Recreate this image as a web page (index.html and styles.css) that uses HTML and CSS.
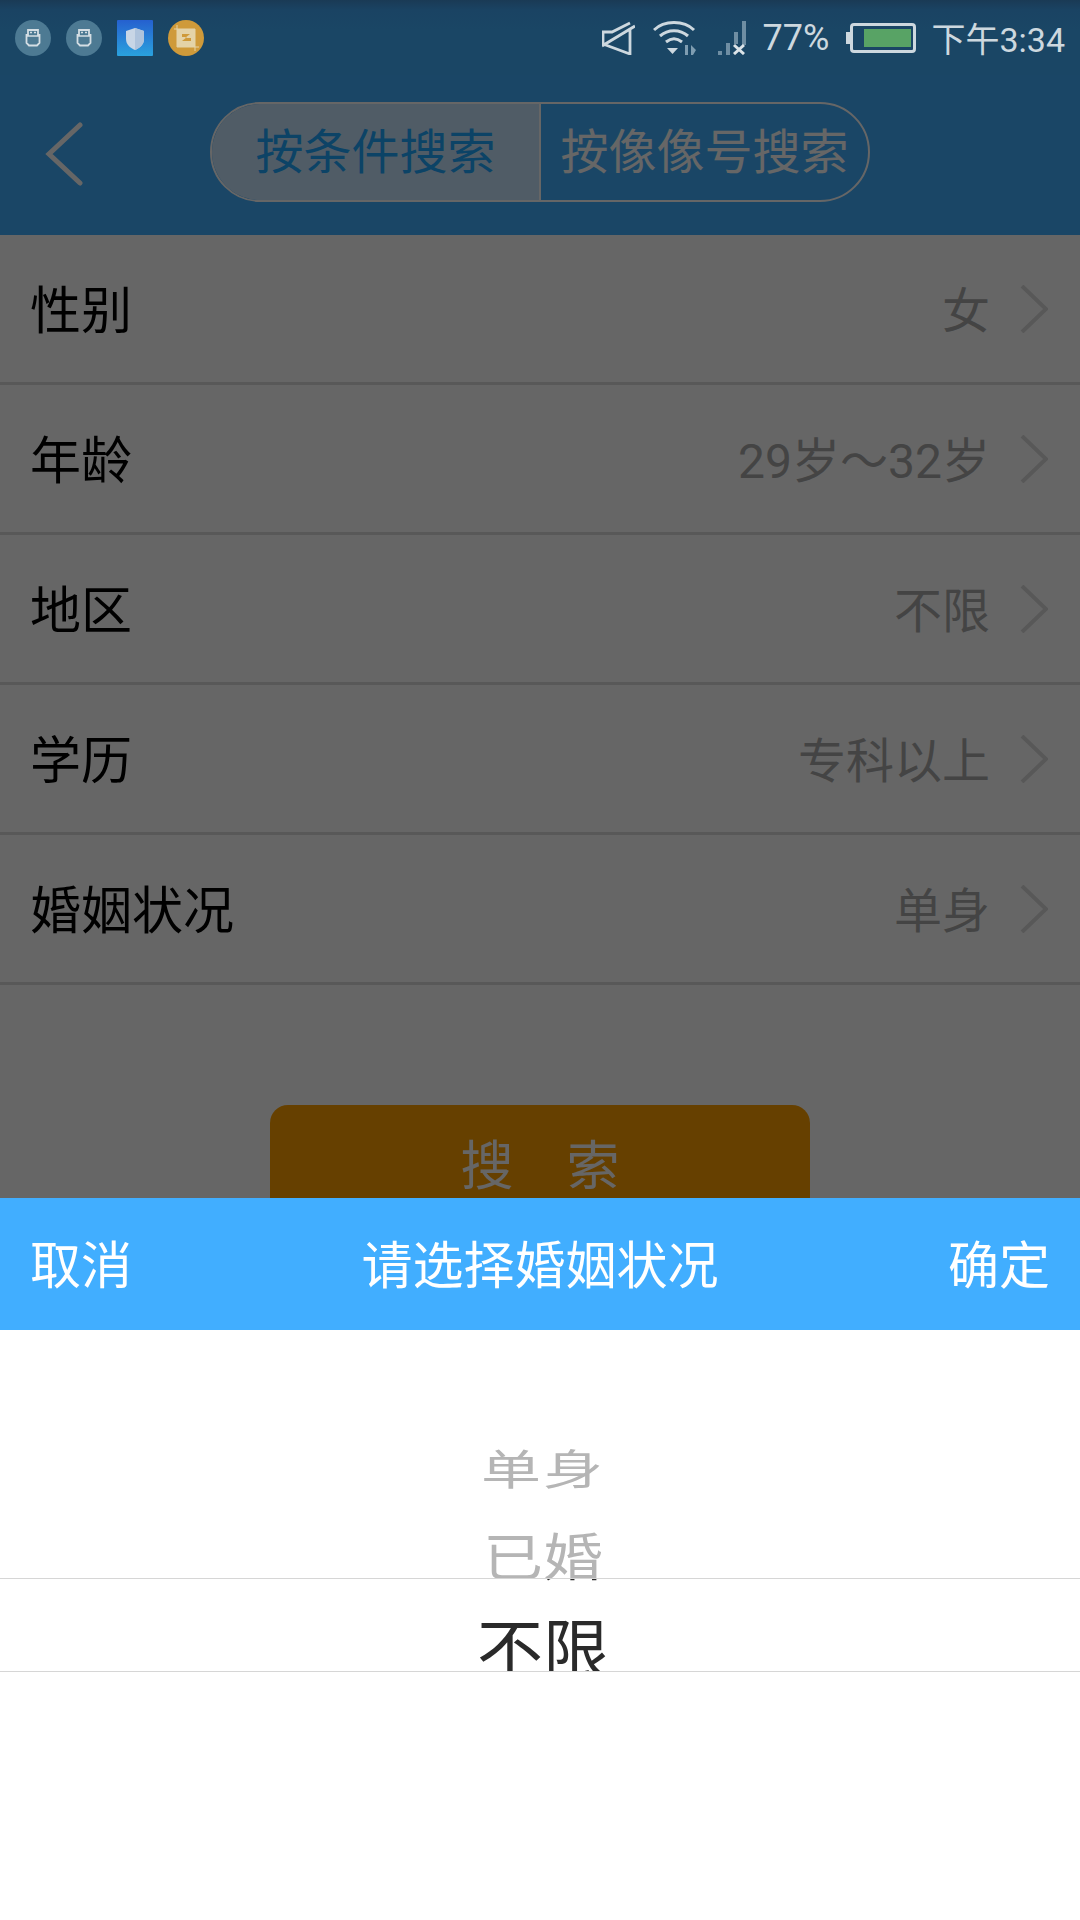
FILE: index.html
```html
<!DOCTYPE html>
<html lang="zh-CN">
<head>
    <meta charset="UTF-8">
    <meta name="viewport" content="width=device-width, initial-scale=1.0">
    <title>搜索</title>
    <link rel="stylesheet" href="styles.css">
</head>
<body>
    <div class="status-bar">
        <div class="status-left">
            <svg class="notify-icon" viewBox="0 0 36 36">
                <circle cx="18" cy="18" r="18" fill="#4d7a93"/>
                <path d="M13 10h10v5h1.500v8l-2.500 2.500h-8l-2.500-2.500v-8h1.500z" fill="none" stroke="#d4dee4" stroke-width="1.800"/>
                <path d="M15 12.500h2M19 12.500h2M12 16h12" stroke="#d4dee4" stroke-width="1.500"/>
            </svg>
            <svg class="notify-icon" viewBox="0 0 36 36">
                <circle cx="18" cy="18" r="18" fill="#4d7a93"/>
                <path d="M13 10h10v5h1.500v8l-2.500 2.500h-8l-2.500-2.500v-8h1.500z" fill="none" stroke="#d4dee4" stroke-width="1.800"/>
                <path d="M15 12.500h2M19 12.500h2M12 16h12" stroke="#d4dee4" stroke-width="1.500"/>
            </svg>
            <svg class="notify-icon" viewBox="0 0 36 36">
                <defs>
                    <linearGradient id="shieldBg" x1="0" y1="0" x2="0" y2="1">
                        <stop offset="0" stop-color="#2560cf"/>
                        <stop offset="1" stop-color="#2aa2de"/>
                    </linearGradient>
                </defs>
                <rect width="36" height="36" rx="1" fill="url(#shieldBg)"/>
                <path d="M18 8l9 3v8c0 6-4.500 9-9 11c-4.500-2-9-5-9-11v-8z" fill="#c8d6e6"/>
                <path d="M18 8l9 3v8c0 6-4.500 9-9 11z" fill="#aec3dc"/>
            </svg>
            <svg class="notify-icon" viewBox="0 0 36 36">
                <circle cx="18" cy="18" r="18" fill="#cf9a3a"/>
                <rect x="9" y="9" width="18" height="18" fill="#e4d3a8"/>
                <path d="M9 5v22h22M6 9h21v22" fill="none" stroke="#e4d3a8" stroke-width="1"/>
                <path d="M14 14h8l-5 4h6v3h-9l5-4h-5z" fill="#cf9a3a"/>
            </svg>
        </div>
        <div class="status-right">
            <svg class="mute-icon" viewBox="0 0 33 34">
                <path d="M1 24V11h9L28 2M1 23l27 10V9M0 25L33 5" fill="none" stroke="#cdd8df" stroke-width="2.800"/>
            </svg>
            <svg class="wifi-icon" viewBox="0 0 43 34">
                <path d="M1 9C11-1 31-1 41 9M7 15c8-7 20-7 28 0M13 21c5-4 11-4 16 0" fill="none" stroke="#cdd8df" stroke-width="3"/>
                <path d="M14 27h11l-5.500 6z" fill="#cdd8df"/>
                <path d="M32 24v10h3V24zM38 24v10h2l3-5z" fill="#7f9db1"/>
            </svg>
            <svg class="signal-icon" viewBox="0 0 28 34">
                <rect x="0" y="30" width="4" height="4" fill="#6f8ea3"/>
                <rect x="8" y="22" width="4" height="12" fill="#6f8ea3"/>
                <rect x="16" y="11" width="4" height="12" fill="#6f8ea3"/>
                <rect x="24" y="0" width="4" height="24" fill="#6f8ea3"/>
                <path d="M16 24l10 9M26 24l-10 9" stroke="#dbe3e8" stroke-width="3"/>
            </svg>
            <span class="battery-text">77%</span>
            <div class="battery">
                <div class="battery-cap"></div>
                <div class="battery-body">
                    <div class="battery-level"></div>
                </div>
            </div>
            <span class="clock">下午3:34</span>
        </div>
    </div>

    <div class="nav-bar">
        <svg class="back-icon" viewBox="0 0 38 64">
            <path d="M35 3L4 32l31 29" fill="none" stroke="#fff" stroke-width="5" stroke-linecap="round"/>
        </svg>
        <div class="tabs">
            <div class="tab tab-active">按条件搜索</div>
            <div class="tab">按像像号搜索</div>
        </div>
    </div>

    <div class="filter-list">
        <div class="filter-row">
            <span class="filter-label">性别</span>
            <span class="filter-value">女</span>
            <svg class="chevron" viewBox="0 0 28 48"><path d="M2 1l24 23L2 47" fill="none" stroke="#dcdcdc" stroke-width="4"/></svg>
        </div>
        <div class="filter-row">
            <span class="filter-label">年龄</span>
            <span class="filter-value">29岁～32岁</span>
            <svg class="chevron" viewBox="0 0 28 48"><path d="M2 1l24 23L2 47" fill="none" stroke="#dcdcdc" stroke-width="4"/></svg>
        </div>
        <div class="filter-row">
            <span class="filter-label">地区</span>
            <span class="filter-value">不限</span>
            <svg class="chevron" viewBox="0 0 28 48"><path d="M2 1l24 23L2 47" fill="none" stroke="#dcdcdc" stroke-width="4"/></svg>
        </div>
        <div class="filter-row">
            <span class="filter-label">学历</span>
            <span class="filter-value">专科以上</span>
            <svg class="chevron" viewBox="0 0 28 48"><path d="M2 1l24 23L2 47" fill="none" stroke="#dcdcdc" stroke-width="4"/></svg>
        </div>
        <div class="filter-row">
            <span class="filter-label">婚姻状况</span>
            <span class="filter-value">单身</span>
            <svg class="chevron" viewBox="0 0 28 48"><path d="M2 1l24 23L2 47" fill="none" stroke="#dcdcdc" stroke-width="4"/></svg>
        </div>
    </div>

    <button class="search-btn" type="button">搜　索</button>

    <div class="scrim"></div>

    <div class="sheet">
        <div class="sheet-bar">
            <span>取消</span>
            <span class="sheet-title">请选择婚姻状况</span>
            <span>确定</span>
        </div>
        <div class="wheel">
            <div class="wheel-item wheel-far">单身</div>
            <div class="wheel-item wheel-near">已婚</div>
            <!-- selected band sits over the wheel, text inside it is dark -->
            <div class="wheel-band">
                <div class="wheel-item wheel-near band-tail" aria-hidden="true">已婚</div>
                <div class="wheel-item wheel-current">不限</div>
            </div>
        </div>
    </div>
</body>
</html>
```

FILE: styles.css
```css
body {
    margin: 0;
    width: 1080px;
    height: 1920px;
    position: relative;
    overflow: hidden;
    background-color: #fff;
    font-family: Roboto, "Noto Sans CJK SC", sans-serif;
}

/* Status bar stays bright, it is above the scrim */
.status-bar {
    position: relative;
    z-index: 3;
    height: 75px;
    box-sizing: border-box;
    padding: 0 15px 0 15px;
    display: flex;
    justify-content: space-between;
    align-items: center;
    background: linear-gradient(#1a3a55 0, #1a4363 10px, #1a4665 30px);
}

.status-left {
    display: flex;
    gap: 15px;
}

.notify-icon {
    width: 36px;
    height: 36px;
    display: block;
}

.status-right {
    display: flex;
    align-items: center;
    color: #cdd8df;
}

.mute-icon {
    width: 33px;
    height: 34px;
    margin-right: 18px;
}

.wifi-icon {
    width: 43px;
    height: 34px;
    margin-right: 22px;
}

.signal-icon {
    width: 28px;
    height: 34px;
    margin-right: 16px;
}

.battery-text {
    font-size: 36px;
    width: 66px;
    margin-right: 18px;
}

.battery {
    display: flex;
    align-items: center;
    margin-right: 15px;
}

.battery-cap {
    width: 4px;
    height: 12px;
    background-color: #cdd8df;
}

.battery-body {
    width: 66px;
    height: 30px;
    box-sizing: border-box;
    border: 3px solid #cdd8df;
    border-radius: 4px;
    padding: 3px 2px 3px 11px;
}

.battery-level {
    height: 100%;
    background-color: #58a365;
}

.clock {
    font-size: 34px;
}

/* Header */
.nav-bar {
    height: 160px;
    box-sizing: border-box;
    padding: 0 0 6px 45px;
    display: flex;
    align-items: center;
    background-color: #41afff;
}

.back-icon {
    width: 38px;
    height: 64px;
    margin-right: 127px;
    margin-top: 4px;
}

.tabs {
    width: 660px;
    height: 100px;
    box-sizing: border-box;
    display: flex;
    border: 2px solid #fff;
    border-radius: 50px;
    overflow: hidden;
}

.tab {
    font-size: 48px;
    line-height: 98px;
    color: #fff;
    flex: 1;
    text-align: center;
    white-space: nowrap;
}

.tab-active {
    flex: 0 0 327px;
    background-color: #c8e6ff;
    color: #20a8ff;
    border-right: 2px solid #fff;
}

/* Filter rows */
.filter-row {
    height: 150px;
    box-sizing: border-box;
    padding: 0 32px 4px 30px;
    display: flex;
    align-items: center;
    border-bottom: 3px solid #dcdcdc;
}

.filter-label {
    font-size: 51px;
    color: #000;
    flex: 1;
}

.filter-value {
    font-size: 48px;
    color: #aaa;
    margin-right: 30px;
}

.chevron {
    width: 28px;
    height: 48px;
    margin-top: 4px;
}

.search-btn {
    display: block;
    width: 540px;
    height: 120px;
    margin: 120px auto 0;
    padding: 0 0 6px;
    border: none;
    border-radius: 18px;
    background-color: #ffa000;
    color: #fff;
    font-family: inherit;
    font-size: 53px;
}

.scrim {
    position: absolute;
    top: 0;
    left: 0;
    width: 100%;
    height: 100%;
    z-index: 2;
    background-color: rgba(0, 0, 0, 0.6);
}

/* Bottom picker */
.sheet {
    position: absolute;
    left: 0;
    bottom: 0;
    width: 100%;
    height: 722px;
    z-index: 3;
    background-color: #fff;
}

.sheet-bar {
    height: 132px;
    box-sizing: border-box;
    padding: 0 30px 4px;
    display: flex;
    justify-content: space-between;
    align-items: center;
    background-color: #41aeff;
    color: #fff;
    font-size: 51px;
}

.wheel {
    position: relative;
    height: 590px;
    padding: 106px 0 0 6px;
    box-sizing: border-box;
}

.wheel-item {
    text-align: center;
    white-space: nowrap;
    color: #b5b5b5;
    font-size: 60px;
    line-height: 70px;
}

.wheel-far {
    transform: scaleY(0.7);
    letter-spacing: 2px;
    margin-bottom: 18px;
}

.wheel-near {
    transform: scaleY(0.86);
}

.wheel-band {
    position: absolute;
    top: 248px;
    left: 0;
    width: 100%;
    height: 94px;
    padding-left: 6px;
    box-sizing: border-box;
    overflow: hidden;
    background-color: #fff;
    border-top: 1px solid #d6d6d6;
    border-bottom: 1px solid #d6d6d6;
}

.band-tail {
    margin-top: -55px;
    color: #2a2a2a;
}

.wheel-current {
    margin-top: 21px;
    color: #2a2a2a;
    font-size: 66px;
    line-height: 74px;
}
```
